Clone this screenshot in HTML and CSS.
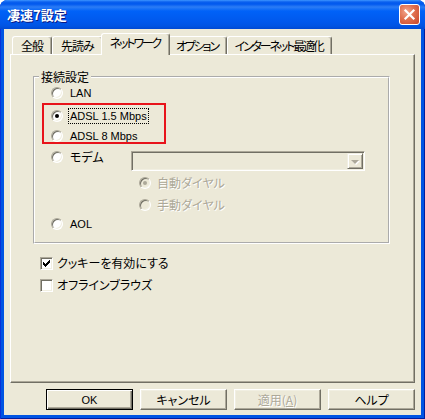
FILE: index.html
```html
<!DOCTYPE html>
<html>
	<head>
		<meta charset="UTF-8">
		<title>凄速7設定</title>
		<link rel="stylesheet" href="styles.css">
	</head>
	<body>
		<div class="win">
			<div class="caption">
				<span class="caption-text">凄速7設定</span>
				<span class="close">
					<svg width="13" height="13" viewBox="0 0 13 13"><path d="M2.5 2.5L10.5 10.5M10.5 2.5L2.5 10.5" stroke="#fff" stroke-width="2.2" stroke-linecap="square"/></svg>
				</span>
			</div>
			<div class="client">
				<ul class="tabs">
					<li>全般</li>
					<li>先読み</li>
					<li class="on kana">ネットワーク</li>
					<li class="kana">オプション</li>
					<li class="kana">インターネット最適化</li>
				</ul>
				<div class="panel">
					<fieldset class="group">
						<legend>接続設定</legend>
						<!-- 接続方法 -->
						<div class="opt r-lan"><span class="radio"></span><span class="lat">LAN</span></div>
						<div class="mark">
							<div class="opt"><span class="radio"><i></i></span><span class="lat focus">ADSL 1.5 Mbps</span></div>
							<div class="opt r-a8"><span class="radio"></span><span class="lat">ADSL 8 Mbps</span></div>
						</div>
						<div class="opt r-modem">
							<span class="radio"></span>
							<span class="modem-label">モデム</span>
							<div class="combo"><span class="drop"><i></i></span></div>
						</div>
						<div class="opt sub off r-auto"><span class="radio"><i></i></span><span>自動ダイヤル</span></div>
						<div class="opt sub off r-manual"><span class="radio"></span><span>手動ダイヤル</span></div>
						<div class="opt r-aol"><span class="radio"></span><span class="lat">AOL</span></div>
					</fieldset>
					<div class="check r-cookie">
						<span class="box"><svg width="7" height="7" viewBox="0 0 7 7"><path d="M0 2h1v1h1v1h1V3h1V2h1V1h1V0h1v3H6v1H5v1H4v1H3v1H2V6H1V5H0z" fill="#000"/></svg></span>
						<span>クッキーを有効にする</span>
					</div>
					<div class="check r-offline">
						<span class="box"></span>
						<span>オフラインブラウズ</span>
					</div>
				</div>
				<div class="buttons">
					<button class="btn def"><span class="lat">OK</span></button>
					<button class="btn">キャンセル</button>
					<button class="btn off">適用(<u>A</u>)</button>
					<button class="btn">ヘルプ</button>
				</div>
			</div>
		</div>
	</body>
</html>
```

FILE: styles.css
```css
html,body{
	margin: 0;
	padding: 0;
}
body{
	background: #fff;
	font: 12px/14px "Noto Sans CJK JP", sans-serif;
	font-feature-settings: "palt";
	color: #000;
}
.lat{
	font-family: "Liberation Sans", "Noto Sans CJK JP", sans-serif;
	font-size: 11px;
}
.win{
	width: 425px;
	height: 419px;
	display: flex;
	flex-direction: column;
	background: #0054E3;
	border-radius: 8px 8px 0 0;
	box-shadow: inset 1px 0 #0831D9, inset -1px 0 #001EA0, inset 0 -1px #001EA0;
}
.caption{
	height: 29px;
	flex: none;
	display: flex;
	align-items: center;
	padding: 0 5px 0 7px;
	border-radius: 7px 7px 0 0;
	background: linear-gradient(to bottom, #3D95FF 0, #0A5FEE 2px, #0058EE 4px, #2C7CF5 7px, #0062F8 11px, #0058EC 22px, #0054E3 26px, #0049D3 29px);
}
.caption-text{
	flex: 1;
	color: #fff;
	font-weight: bold;
	font-size: 13px;
	text-shadow: 1px 1px #0A1883;
}
.close{
	width: 21px;
	height: 21px;
	box-sizing: border-box;
	border: 1px solid #fff;
	border-radius: 3px;
	background: radial-gradient(circle at 35% 35%, #F2A68E 0, #E0704F 45%, #C8452A 100%);
	display: flex;
	align-items: center;
	justify-content: center;
}
.client{
	flex: 1;
	margin: 0 4px 4px;
	padding: 4px 6px 5px;
	background: #ECE9D8;
	display: flex;
	flex-direction: column;
}
/* タブ */
.tabs{
	list-style: none;
	margin: 0;
	padding: 0 0 0 2px;
	height: 21px;
	display: flex;
	align-items: flex-end;
}
.tabs li{
	height: 18px;
	line-height: 17px;
	padding: 0 8px;
	letter-spacing: -1px;
	white-space: nowrap;
	box-sizing: border-box;
	border: 1px solid;
	border-color: #fff #716F64 transparent #fff;
	border-bottom: 0;
	border-radius: 3px 3px 0 0;
	box-shadow: inset -1px 0 #ACA899;
}
.tabs li.kana{
	letter-spacing: -2.2px;
	padding: 0 8px 0 7px;
}
.tabs li.on{
	height: 22px;
	line-height: 18px;
	margin: 0 -2px -1px;
	padding: 0 9px 0 8px;
	background: #ECE9D8;
	position: relative;
	z-index: 1;
}
.panel{
	flex: 1;
	border: 1px solid;
	border-color: #fff #716F64 #716F64 #fff;
	box-shadow: inset -1px -1px #ACA899;
	padding: 15px 24px 0 22px;
}
.group{
	margin: 0;
	padding: 0 0 11px;
	border: 2px groove #fff;
	min-width: 0;
}
.group legend{
	margin-left: 4px;
	padding: 0 2px;
	line-height: 14px;
}
.opt{
	display: flex;
	align-items: center;
	height: 14px;
	padding-left: 16px;
	white-space: nowrap;
}
.opt .radio{
	margin-right: 7px;
}
.r-lan{
	margin-top: 2px;
}
.mark{
	margin: 3px 0 0 7px;
	width: 124px;
	height: 41px;
	box-sizing: border-box;
	border: 2px solid #E8141B;
	padding: 4px 0 0 7px;
}
.mark .opt{
	padding-left: 0;
}
.r-a8{
	margin-top: 6px;
}
.focus{
	outline: 1px dotted #000;
	outline-offset: 0;
	padding: 0 1px;
	margin-left: -1px;
}
.r-modem{
	margin-top: 6px;
	height: 21px;
	align-items: flex-start;
}
.r-modem .radio{
	margin-top: 1px;
}
.modem-label{
	width: 61px;
}
.combo{
	margin-top: 1px;
	width: 234px;
	height: 20px;
	box-sizing: border-box;
	border: 1px solid;
	border-color: #ACA899 #fff #fff #ACA899;
	box-shadow: inset 1px 1px #716F64, inset -1px -1px #F1EFE2;
	background: #ECE9D8;
	display: flex;
	justify-content: flex-end;
	padding: 1px;
}
.drop{
	width: 16px;
	height: 16px;
	box-sizing: border-box;
	border: 1px solid;
	border-color: #F1EFE2 #716F64 #716F64 #F1EFE2;
	box-shadow: inset 1px 1px #fff, inset -1px -1px #ACA899;
	display: flex;
	align-items: center;
	justify-content: center;
}
.drop i{
	width: 0;
	height: 0;
	border-left: 4px solid transparent;
	border-right: 4px solid transparent;
	border-top: 4px solid #ACA899;
	margin-top: 1px;
	filter: drop-shadow(1px 1px 0 #fff);
}
.sub{
	padding-left: 104px;
}
.sub .radio{
	margin-right: 6px;
}
.r-auto{
	margin-top: 5px;
}
.r-manual{
	margin-top: 8px;
}
.r-aol{
	margin-top: 5px;
}
.off{
	color: #ACA899;
	text-shadow: 1px 1px #fff;
}
.radio{
	flex: none;
	width: 12px;
	height: 12px;
	box-sizing: border-box;
	border-radius: 50%;
	border: 1px solid;
	border-color: #ACA899 #fff #fff #ACA899;
	box-shadow: inset 1px 1px #716F64, inset -1px -1px #F1EFE2;
	background: #fff;
	display: flex;
	align-items: center;
	justify-content: center;
}
.radio i{
	width: 4px;
	height: 4px;
	border-radius: 50%;
	background: #000;
}
.off .radio{
	background: #ECE9D8;
}
.off .radio i{
	background: #ACA899;
}
/* チェックボックス */
.check{
	display: flex;
	align-items: center;
	height: 14px;
	margin-left: 7px;
}
.r-cookie{
	margin-top: 12px;
}
.r-offline{
	margin-top: 8px;
}
.box{
	flex: none;
	width: 13px;
	height: 13px;
	box-sizing: border-box;
	margin-right: 4px;
	border: 1px solid;
	border-color: #ACA899 #fff #fff #ACA899;
	box-shadow: inset 1px 1px #716F64, inset -1px -1px #F1EFE2;
	background: #fff;
	display: flex;
	align-items: center;
	justify-content: center;
}
/* ボタン */
.buttons{
	display: flex;
	justify-content: flex-end;
	gap: 7px;
	margin-top: 6px;
}
.btn{
	width: 87px;
	height: 21px;
	padding: 0;
	font: inherit;
	color: #000;
	background: #ECE9D8;
	border: 1px solid;
	border-color: #fff #716F64 #716F64 #fff;
	box-shadow: inset -1px -1px #ACA899, inset 1px 1px #F1EFE2;
}
.btn.def{
	border-color: #000;
	box-shadow: inset 1px 1px #fff, inset -1px -1px #716F64, inset -2px -2px #ACA899;
}
.btn.off{
	color: #ACA899;
}
```
